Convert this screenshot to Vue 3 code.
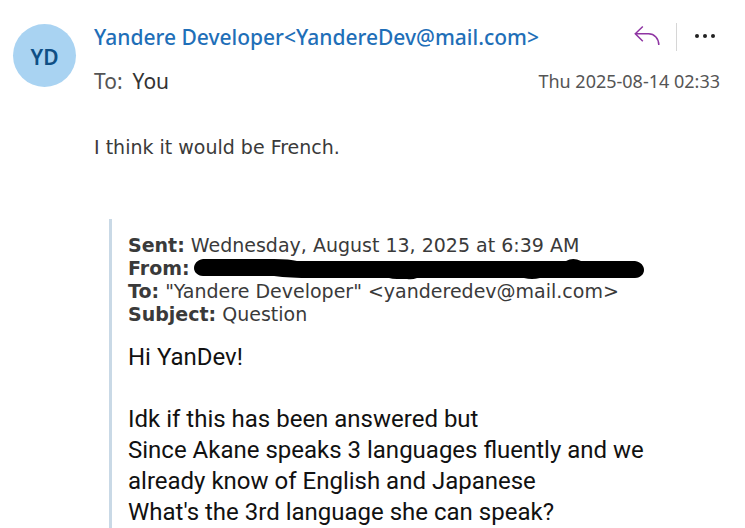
<script setup>
const sender = { initials: 'YD', name: 'Yandere Developer', email: 'YandereDev@mail.com' }
const message = [
  'Hi YanDev!',
  '',
  'Idk if this has been answered but',
  'Since Akane speaks 3 languages fluently and we',
  'already know of English and Japanese',
  "What's the 3rd language she can speak?",
]
</script>

<template>
  <main class="mail">
    <div class="avatar" aria-hidden="true">{{ sender.initials }}</div>
    <article class="content">
      <header class="head">
        <div class="row">
          <h1 class="sender">{{ sender.name }}&lt;{{ sender.email }}&gt;</h1>
          <div class="actions">
            <button class="action" type="button" aria-label="Reply">
              <svg class="reply" viewBox="0 0 26 24" width="26" height="24">
                <path d="M8.800 1.500 1.300 8.800 8.800 16.200M1.300 8.800H14.500C20.500 8.800 24.800 13.500 24.800 20" />
              </svg>
            </button>
            <span class="divider"></span>
            <button class="action" type="button" aria-label="More actions">
              <svg class="more" viewBox="0 0 20 6" width="20" height="6">
                <circle cx="2" cy="2" r="2" />
                <circle cx="10" cy="2" r="2" />
                <circle cx="18" cy="2" r="2" />
              </svg>
            </button>
          </div>
        </div>
        <div class="row">
          <p class="to"><span>To:</span><span class="recipient">You</span></p>
          <time class="date" datetime="2025-08-14T02:33">Thu 2025-08-14 02:33</time>
        </div>
      </header>

      <p class="answer">I think it would be French.</p>

      <blockquote class="quote">
        <div class="meta">
          <p><b>Sent:</b> Wednesday, August 13, 2025 at 6:39 AM</p>
          <p class="from">
            <b>From:</b>
            <svg class="redacted" viewBox="0 0 452 22" width="452" height="22">
              <path d="M9 1 80 1Q96 1 103 3L372 3Q379 -1 387 3L441 3C453 5 453 19 441 20L346 20Q338 22 330 20L223 20Q218 22 213 21L203 21Q198 21 195 20L118 20Q96 20 80 18L9 18C-3 17-3 3 9 1Z" />
            </svg>
          </p>
          <p><b>To:</b> "Yandere Developer" &lt;yanderedev@mail.com&gt;</p>
          <p><b>Subject:</b> Question</p>
        </div>
        <div class="message">
          <p v-for="(line, i) in message" :key="i">{{ line }}</p>
        </div>
      </blockquote>
    </article>
  </main>
</template>

<style>
body {
  margin: 0;
  background: #fff;
}
</style>

<style scoped>
p,
h1,
blockquote {
  margin: 0;
}

.mail {
  display: flex;
  align-items: flex-start;
  gap: 18px;
  padding: 21px 25px 0 13px;
  color: #3a3a3a;
  font-family: "Segoe UI", "Noto Sans", sans-serif;
}

.avatar {
  display: grid;
  flex: none;
  place-items: center;
  box-sizing: border-box;
  width: 63px;
  height: 63px;
  margin-top: 3px;
  padding-top: 2px;
  border-radius: 50%;
  background: #a9d3f2;
  color: #0f4f85;
  font-size: 21px;
  font-weight: 600;
}

.content {
  flex: 1;
  min-width: 0;
}

.head {
  display: grid;
  gap: 12px;
}

.row {
  display: flex;
  align-items: center;
  justify-content: space-between;
  height: 32px;
}

.sender {
  color: #1f6fb8;
  font-size: 21px;
  font-weight: 500;
  line-height: 32px;
  white-space: nowrap;
}

.actions {
  display: flex;
  align-items: center;
  gap: 16px;
  padding-right: 5px;
}

.action {
  display: flex;
  padding: 0;
  border: 0;
  background: none;
}

.reply {
  fill: none;
  stroke: #8f35a3;
  stroke-width: 1.5;
}

.more {
  fill: #222;
}

.divider {
  width: 1px;
  height: 28px;
  margin-right: 2px;
  background: #d6d6d6;
}

.to {
  display: flex;
  gap: 10px;
  color: #555;
  font-size: 21px;
}

.recipient {
  color: #333;
}

.date {
  color: #555;
  font-size: 18px;
  white-space: nowrap;
}

.answer {
  margin-top: 36px;
  font-family: Verdana, "DejaVu Sans", sans-serif;
  font-size: 19px;
  line-height: 28px;
}

.quote {
  margin: 58px 0 0 15px;
  padding: 15px 0 0 16px;
  border-left: 3px solid #c9d9e6;
}

.meta {
  font-family: Verdana, "DejaVu Sans", sans-serif;
  font-size: 19px;
  line-height: 23px;
}

.from {
  display: flex;
  align-items: center;
  gap: 4px;
}

.redacted {
  flex: 0 1 auto;
  min-width: 0;
  fill: #000;
}

.message {
  margin-top: 16px;
  color: #111;
  font-family: Aptos, Roboto, sans-serif;
  font-size: 24px;
  line-height: 31px;
}

.message p {
  min-height: 31px;
}
</style>
